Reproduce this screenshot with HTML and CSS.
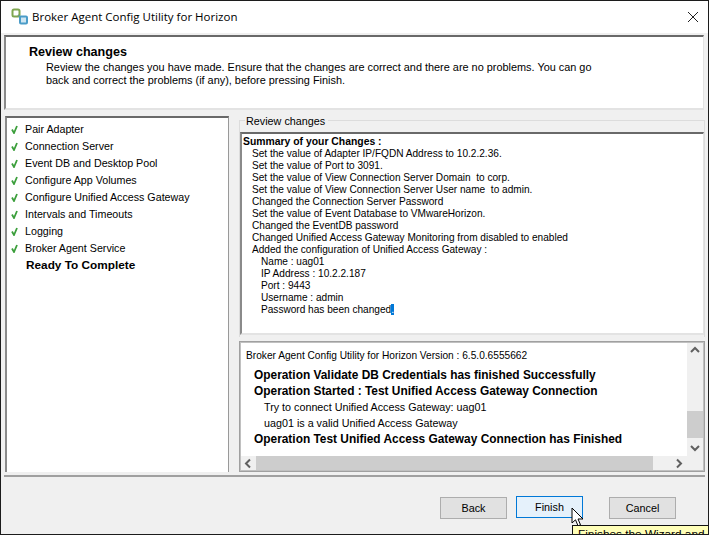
FILE: index.html
```html
<!DOCTYPE html>
<html lang="en">
<head>
<meta charset="utf-8">
<title>Broker Agent Config Utility for Horizon</title>
<link rel="stylesheet" href="styles.css">
</head>
<body>
<div class="window">
  <header class="titlebar">
    <svg class="app-icon" width="18" height="18" viewBox="0 0 18 18">
      <rect x="1.5" y="1.5" width="7" height="7" rx="1.5" fill="none" stroke="#7fa650" stroke-width="2"/>
      <path d="M7 7l4 4" stroke="#6f9f80" stroke-width="2"/>
      <rect x="9" y="8.5" width="7" height="7" rx="1" fill="#cfe6f2" stroke="#4a9cc8" stroke-width="2"/>
    </svg>
    <span class="title">Broker Agent Config Utility for Horizon</span>
    <svg class="close" width="10" height="10" viewBox="0 0 10 10"><path d="M0 0l10 10M10 0L0 10" stroke="#222" stroke-width="1" fill="none"/></svg>
  </header>

  <section class="banner">
    <h1 class="banner-title">Review changes</h1>
    <p class="banner-text">Review the changes you have made. Ensure that the changes are correct and there are no problems. You can go<br>back and correct the problems (if any), before pressing Finish.</p>
  </section>

  <main class="main">
    <ul class="steps">
      <li class="step"><svg class="check" width="7" height="9" viewBox="0 0 7 9"><path d="M1 4.500L3 8 6 1" fill="none" stroke="#3c9f3c" stroke-width="1.800"/></svg>Pair Adapter</li>
      <li class="step"><svg class="check" width="7" height="9" viewBox="0 0 7 9"><path d="M1 4.500L3 8 6 1" fill="none" stroke="#3c9f3c" stroke-width="1.800"/></svg>Connection Server</li>
      <li class="step"><svg class="check" width="7" height="9" viewBox="0 0 7 9"><path d="M1 4.500L3 8 6 1" fill="none" stroke="#3c9f3c" stroke-width="1.800"/></svg>Event DB and Desktop Pool</li>
      <li class="step"><svg class="check" width="7" height="9" viewBox="0 0 7 9"><path d="M1 4.500L3 8 6 1" fill="none" stroke="#3c9f3c" stroke-width="1.800"/></svg>Configure App Volumes</li>
      <li class="step"><svg class="check" width="7" height="9" viewBox="0 0 7 9"><path d="M1 4.500L3 8 6 1" fill="none" stroke="#3c9f3c" stroke-width="1.800"/></svg>Configure Unified Access Gateway</li>
      <li class="step"><svg class="check" width="7" height="9" viewBox="0 0 7 9"><path d="M1 4.500L3 8 6 1" fill="none" stroke="#3c9f3c" stroke-width="1.800"/></svg>Intervals and Timeouts</li>
      <li class="step"><svg class="check" width="7" height="9" viewBox="0 0 7 9"><path d="M1 4.500L3 8 6 1" fill="none" stroke="#3c9f3c" stroke-width="1.800"/></svg>Logging</li>
      <li class="step"><svg class="check" width="7" height="9" viewBox="0 0 7 9"><path d="M1 4.500L3 8 6 1" fill="none" stroke="#3c9f3c" stroke-width="1.800"/></svg>Broker Agent Service</li>
      <li class="step step-current">Ready To Complete</li>
    </ul>

    <div class="content">
      <div class="group">
        <span class="legend">Review changes</span>
        <div class="summary">
          <div class="summary-head">Summary of your Changes :</div>
          <div class="l1">Set the value of Adapter IP/FQDN Address to 10.2.2.36.</div>
          <div class="l1">Set the value of Port to 3091.</div>
          <div class="l1">Set the value of View Connection Server Domain&nbsp; to corp.</div>
          <div class="l1">Set the value of View Connection Server User name&nbsp; to admin.</div>
          <div class="l1">Changed the Connection Server Password</div>
          <div class="l1">Set the value of Event Database to VMwareHorizon.</div>
          <div class="l1">Changed the EventDB password</div>
          <div class="l1">Changed Unified Access Gateway Monitoring from disabled to enabled</div>
          <div class="l1">Added the configuration of Unified Access Gateway :</div>
          <div class="l2">Name : uag01</div>
          <div class="l2">IP Address : 10.2.2.187</div>
          <div class="l2">Port : 9443</div>
          <div class="l2">Username : admin</div>
          <div class="l2">Password has been changed<span class="selected">.</span></div>
        </div>
      </div>

      <div class="log">
        <div class="log-body">
          <div class="log-view">
            <div class="log-version">Broker Agent Config Utility for Horizon Version : 6.5.0.6555662</div>
            <div class="log-op">Operation Validate DB Credentials has finished Successfully</div>
            <div class="log-op">Operation Started : Test Unified Access Gateway Connection</div>
            <div class="log-msg">Try to connect Unified Access Gateway: uag01</div>
            <div class="log-msg">uag01 is a valid Unified Access Gateway</div>
            <div class="log-op">Operation Test Unified Access Gateway Connection has Finished</div>
          </div>
          <div class="vscroll">
            <svg class="sb-btn" width="16" height="16" viewBox="0 0 16 16"><path d="M4 10l4-4 4 4" fill="none" stroke="#606060" stroke-width="2"/></svg>
            <div class="vtrack"><div class="vthumb"></div></div>
            <svg class="sb-btn" width="16" height="16" viewBox="0 0 16 16"><path d="M4 6l4 4 4-4" fill="none" stroke="#606060" stroke-width="2"/></svg>
          </div>
        </div>
        <div class="hscroll">
          <svg class="sb-btn" width="16" height="15" viewBox="0 0 16 15"><path d="M10 3.500l-4 4 4 4" fill="none" stroke="#606060" stroke-width="2"/></svg>
          <div class="hthumb"></div>
          <div class="htrack"></div>
          <svg class="sb-btn" width="16" height="15" viewBox="0 0 16 15"><path d="M6 3.500l4 4-4 4" fill="none" stroke="#606060" stroke-width="2"/></svg>
          <div class="sb-corner"></div>
        </div>
      </div>
    </div>
  </main>

  <footer class="footer">
    <button class="btn btn-back">Back</button>
    <button class="btn btn-finish">Finish</button>
    <button class="btn btn-cancel">Cancel</button>
    <svg class="cursor" width="13" height="20" viewBox="0 0 13 20"><path d="M1 1v15l3.500-3.200 2.500 6 2.500-1-2.500-5.800H12z" fill="#fff" stroke="#000" stroke-width="1"/></svg>
    <div class="tooltip">Finishes the Wizard and applies the changes</div>
  </footer>
</div>
</body>
</html>
```

FILE: styles.css
```css
* { box-sizing: border-box; }
html, body { margin: 0; padding: 0; }
body {
  width: 709px;
  height: 535px;
  overflow: hidden;
  font-family: "Liberation Sans", sans-serif;
  color: #000;
}
.window {
  width: 709px;
  height: 535px;
  border: 1px solid #1c1c1c;
  background: #f0f0f0;
  display: flex;
  flex-direction: column;
  overflow: hidden;
  position: relative;
}
.titlebar {
  height: 32px;
  flex: none;
  background: #fff;
  display: flex;
  align-items: center;
  padding-left: 10px;
  padding-right: 10px;
}
.app-icon { margin-right: 3px; margin-top: -1px; }
.title {
  font-family: "Open Sans", sans-serif;
  font-size: 11.500px;
  flex: 1;
  white-space: nowrap;
  margin-top: -1px;
}
.close { margin-top: -1px; }

.banner {
  flex: none;
  height: 75px;
  margin: 2px 4px 0 3px;
  background: #fff;
  border-top: 2px solid #696969;
  border-left: 2px solid #8a8a8a;
  border-right: 1px solid #e3e3e3;
  border-bottom: 2px solid #e3e3e3;
  padding: 8px 0 0 23px;
}
.banner-title {
  margin: 0;
  font-size: 12.600px;
  line-height: 15px;
  font-weight: 700;
}
.banner-text {
  margin: 1px 0 0 17px;
  font-size: 10.900px;
  line-height: 13px;
  white-space: nowrap;
}

.main {
  flex: none;
  height: 356px;
  margin-top: 6px;
  display: flex;
  padding-left: 4px;
}
.steps {
  width: 224px;
  flex: none;
  margin: 0;
  padding: 3px 0 0 18px;
  list-style: none;
  background: #fff;
  border-top: 2px solid #696969;
  border-left: 2px solid #8a8a8a;
  border-right: 1px solid #999;
  font-size: 10.700px;
}
.step {
  height: 17px;
  line-height: 17px;
  position: relative;
  white-space: nowrap;
}
.step-current { font-weight: 700; font-size: 11.800px; padding-left: 1px; }
.check { position: absolute; left: -14px; top: 4px; }

.content {
  flex: none;
  width: 466px;
  margin-left: 10px;
  display: flex;
  flex-direction: column;
}
.group {
  height: 217px;
  margin-top: 4px;
  border-top: 1px solid #dcdcdc;
  border-left: 1px solid #dcdcdc;
  border-right: 1px solid #dcdcdc;
  position: relative;
  padding-top: 11px;
}
.legend {
  position: absolute;
  top: -6px;
  left: 5px;
  padding: 0 3px 0 1px;
  background: #f0f0f0;
  font-size: 10.800px;
  line-height: 13px;
}
.summary {
  height: 203px;
  background: #fff;
  border-top: 2px solid #696969;
  border-left: 2px solid #8a8a8a;
  border-right: 1px solid #e3e3e3;
  border-bottom: 2px solid #e3e3e3;
  padding: 2px 0 0 1px;
  font-size: 10.100px;
  line-height: 12px;
  white-space: nowrap;
}
.summary-head { font-weight: 700; font-size: 10.400px; }
.l1 { padding-left: 9px; }
.l2 { padding-left: 18px; }
.selected { background: #0078d7; color: #fff; }

.log {
  height: 131px;
  margin-top: 4px;
  background: #fff;
  border: 1px solid #a0a0a0;
  display: flex;
  flex-direction: column;
  outline: 1px solid #c0c0c0;
  outline-offset: -2px;
}
.log-body { flex: 1; display: flex; min-height: 0; }
.log-view {
  flex: 1;
  padding: 7px 0 0 6px;
  white-space: nowrap;
  overflow: hidden;
}
.log-version { font-size: 10.170px; line-height: 13px; margin-bottom: 5px; }
.log-op { font-size: 11.900px; line-height: 16px; font-weight: 700; padding-left: 8px; }
.log-msg { font-size: 10.750px; line-height: 16px; padding-left: 18px; }
.vscroll {
  width: 17px;
  flex: none;
  display: flex;
  flex-direction: column;
  background: #f0f0f0;
}
.vtrack { flex: 1; display: flex; flex-direction: column; justify-content: flex-end; padding-bottom: 2px; }
.vthumb { height: 27px; background: #cdcdcd; }
.sb-btn { flex: none; display: block; }
.hscroll { height: 15px; flex: none; display: flex; background: #f0f0f0; }
.hthumb { width: 397px; background: #cdcdcd; flex: none; }
.htrack { flex: 1; }
.sb-corner { width: 17px; flex: none; }

.footer {
  flex: 1;
  margin: 3px 3px 0;
  border-top: 2px solid #a0a0a0;
  display: flex;
  padding: 19px 29px 0 436px;
  position: relative;
}
.btn {
  width: 67px;
  height: 22px;
  padding: 0;
  background: #e1e1e1;
  border: 1px solid #adadad;
  font-family: "Liberation Sans", sans-serif;
  font-size: 10.800px;
  color: #000;
}
.btn-back { margin-top: 1px; }
.btn-finish { background: #e5f1fb; border-color: #0078d7; margin-left: 9px; }
.btn-cancel { margin-left: 26px; margin-top: 1px; }
.cursor { position: absolute; left: 567px; top: 30px; }
.tooltip {
  position: absolute;
  left: 568px;
  top: 48px;
  width: 200px;
  height: 20px;
  background: #ffffb8;
  border: 1px solid #111;
  padding: 1px 0 0 5px;
  font-size: 11.800px;
  line-height: 14px;
  white-space: nowrap;
}
```
